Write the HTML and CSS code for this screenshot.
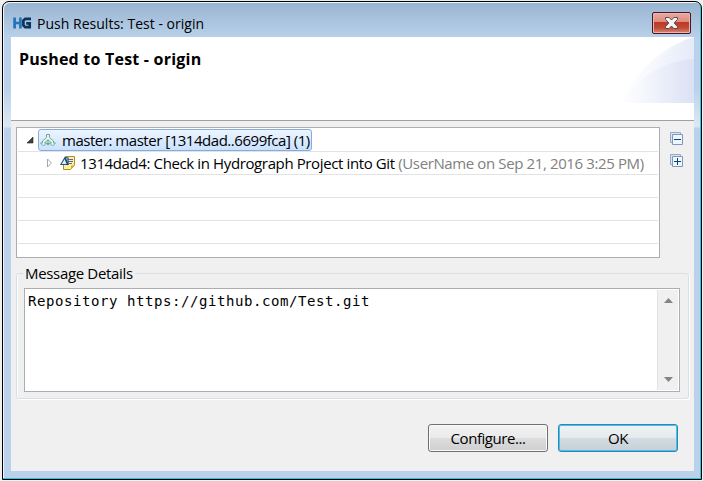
FILE: index.html
```html
<!DOCTYPE html>
<html lang="en">
<head>
<meta charset="utf-8">
<title>Push Results: Test - origin</title>
<link rel="stylesheet" href="styles.css">
</head>
<body>
<main class="window">
  <header class="titlebar">
    <svg class="logo" width="19" height="12" viewBox="0 0 19 12" fill="none" stroke-width="2.7"><path d="M1.6 0.5V11.5M7.4 0.5V11.5M1.6 6H8" stroke="#2475b5"/><path d="M18 1.9H12.2L10.4 3.5V8.5L12.2 10.1H16.7V6.3H13.2" stroke="#0c345c"/></svg>
    <h1 class="title">Push Results: Test - origin</h1>
    <button class="close" aria-label="Close"><svg width="37" height="20" viewBox="0 0 37 20"><path d="M12.5 4.5H16.2L18.5 7L20.8 4.5H24.5V6.3L21.2 10L24.5 13.7V15.5H20.8L18.5 13L16.2 15.5H12.5V13.7L15.8 10L12.5 6.3Z" fill="#f3f3f3" stroke="#5c4a55"/></svg></button>
  </header>
  <section class="client">
    <div class="banner">
      <h2>Pushed to Test - origin</h2>
      <svg class="swoosh" width="75" height="66" viewBox="0 0 75 66"><defs><linearGradient id="a"><stop stop-color="#fff"/><stop offset=".3" stop-color="#fafbfe"/><stop offset="1" stop-color="#eaeef9"/></linearGradient><linearGradient id="b"><stop stop-color="#f7f8fd" stop-opacity="0"/><stop offset="1" stop-color="#dbe1f5"/></linearGradient></defs><path d="M0 66C15 38 44 8 75 0V66Z" fill="url(#a)"/><path d="M19 66C26 37 46 9 75 0V66Z" fill="url(#b)" opacity=".3"/><path d="M0 66C20 40 43 24 75 22V66Z" fill="url(#b)"/></svg>
    </div>
    <div class="results">
      <div class="tree">
        <div class="row">
          <svg class="arrow open" width="8" height="8" viewBox="0 0 8 8"><path d="M7 1V7H1Z" fill="#404040" stroke="#222" stroke-width=".6"/></svg>
          <div class="selected">
            <svg class="push-icon" width="16" height="16" viewBox="0 0 16 16" fill="#edf7f3" stroke="#6aa698"><path d="M6.5 2.5H9.5V5.5L13.5 9V11H15.5L12.5 14L9.5 11H11.5L8 7.5L4.5 11H6.5L3.5 14L.5 11H2.5V9L6.5 5.5ZM8 8V11.5M6.5 11.5H9.5L8 13.2Z"/></svg>
            <span class="branch">master: master [1314dad..6699fca] (1)</span>
          </div>
        </div>
        <div class="row child">
          <svg class="arrow" width="7" height="10" viewBox="0 0 7 10"><path d="M1.5 1V9L5.5 5Z" fill="#fff" stroke="#a6a6a6"/></svg>
          <svg class="commit-icon" width="16" height="16" viewBox="0 0 16 16"><path d="M5.5 1.5H14.5V10L10.5 14.5H3.5V10Z" fill="#fff0a0" stroke="#b58b29"/><path d="M11 14V10.5H14Z" fill="#d7a72d"/><path d="M8 4.5H13M8 6.5H13M9 8.5H12" stroke="#536ba0"/><path d="M5 2.5L.8 9.5H8V3Z" fill="#dceefa" stroke="#245785" stroke-width="1.2"/><path d="M5 3L8 10" stroke="#174b80" stroke-width="1.8"/></svg>
          <span class="commit">1314dad4: Check in Hydrograph Project into Git <span class="meta">(UserName on Sep 21, 2016 3:25 PM)</span></span>
        </div>
        <div class="row"></div><div class="row"></div><div class="row"></div>
      </div>
      <div class="tools">
        <svg width="14" height="14" viewBox="0 0 14 14"><path d="M2 10.5H.5V.5H10.5V2" fill="#dbe5f1" stroke="#94a9c5"/><path d="M2.5 2.5H12.5V12.5H2.5Z" fill="#eef7ff" stroke="#8396b5"/><path d="M4 7.5H11" stroke="#064276"/></svg>
        <svg width="14" height="14" viewBox="0 0 14 14"><path d="M2 10.5H.5V.5H10.5V2" fill="#dbe5f1" stroke="#94a9c5"/><path d="M2.5 2.5H12.5V12.5H2.5Z" fill="#eef7ff" stroke="#8396b5"/><path d="M4 7.5H11M7.5 4V11" stroke="#064276"/></svg>
      </div>
    </div>
    <fieldset class="details">
      <legend>Message Details</legend>
      <div class="message"><pre>Repository https://github.com/Test.git</pre>
        <div class="scroll"><svg width="9" height="5" viewBox="0 0 9 5"><path d="M4.5 0L9 5H0Z" fill="#858585"/></svg><svg width="9" height="5" viewBox="0 0 9 5"><path d="M0 0H9L4.5 5Z" fill="#858585"/></svg></div>
      </div>
    </fieldset>
    <footer class="actions"><button class="button"><span class="configure">Configure...</span></button><button class="button primary"><span>OK</span></button></footer>
  </section>
</main>
</body>
</html>
```
FILE: styles.css
```css
* { box-sizing: border-box; }
body { margin: 0; padding: 1px 1px 1px 2px; width: 703px; height: 481px; overflow: hidden; background: #f0f0f0; font-family: "Open Sans", "Noto Sans", sans-serif; font-size: 15px; color: #000; }
svg { flex-shrink: 0; }
.window { width: 700px; height: 479px; border: 1px solid #000; border-radius: 7px 7px 0 0; background: linear-gradient(#99b4d1, #b9d1ea 36px, #b9d1ea 85px, #dce8f4 124px, #b9d1ea 127px); box-shadow: inset -1px -1px #20cbe6, inset 1px 1px #f2f7fc; padding: 0 7px 7px 8px; }
.titlebar { height: 35px; display: flex; align-items: center; padding: 7px 3px 0 2px; }
.logo { margin-top: -1px; }
.title { margin: 1px auto 0 5px; font-size: 14px; font-weight: 400; line-height: 20px; letter-spacing: .02px; white-space: nowrap; }
.close { width: 39px; height: 22px; padding: 0; border: 1px solid #451529; border-radius: 2px; background: linear-gradient(#e9aaa0, #df8b7e 45%, #b83b26 46%, #c24a34 75%, #d9897a); box-shadow: inset 0 0 0 1px #edb5ac; }
.close svg { display: block; }
.client { width: 683px; height: 434px; background: #f0f0f0; }
.banner { height: 84px; background: #fff; border-bottom: 1px solid #a0a0a0; display: flex; justify-content: space-between; padding-left: 8px; }
.banner h2 { margin: 11px 0 0; font-size: 16px; line-height: 23px; letter-spacing: .22px; }
.results { display: flex; padding: 6px 0 0 5px; }
.tree { width: 644px; height: 131px; border: 1px solid #abadb3; background: #fff; padding: 1px; }
.row { height: 23px; border-bottom: 1px solid #e3e3e3; display: flex; align-items: center; white-space: nowrap; }
.arrow.open { margin-left: 8px; }
.selected { height: 22px; width: 274px; margin-left: 4px; border: 1px solid #84acdd; border-radius: 3px; background: linear-gradient(#edf5ff, #c9e2ff); display: flex; align-items: center; padding-left: 1px; }
.branch { margin-left: 6px; line-height: 20px; letter-spacing: -.47px; }
.child { padding-left: 28px; }
.commit-icon { margin-left: 7px; }
.commit { margin-left: 4px; line-height: 21px; letter-spacing: -.38px; }
.meta { color: #808080; }
.tools { display: flex; flex-direction: column; gap: 8px; padding: 5px 0 0 10px; }
.details { width: 673px; height: 136px; margin: 5px 0 0 5px; padding: 5px 7px 6px; border: 1px solid #d5dfe5; border-radius: 3px; box-shadow: 1px 1px #fff, inset 1px 0 #fff; }
.details legend { margin-left: -1px; padding: 0 2px; line-height: 20px; letter-spacing: -.33px; }
.message { height: 104px; width: 656px; background: #fff; border: 1px solid #abadb3; display: flex; justify-content: space-between; padding: 1px; }
pre { margin: 0; padding: 1px 0 0 2px; font: 14px/20px "DejaVu Sans Mono", monospace; letter-spacing: .57px; }
.scroll { width: 21px; background: #f0f0f0; border-left: 1px solid #e3e3e3; display: flex; flex-direction: column; align-items: center; justify-content: space-between; padding: 8px 1px; }
.actions { display: flex; gap: 10px; padding: 25px 0 0 417px; }
.button { width: 120px; height: 28px; padding: 0; border: 1px solid #707070; border-radius: 3px; background: linear-gradient(#f2f2f2, #ebebeb 48%, #dddddd 50%, #cfcfcf); box-shadow: inset 0 0 0 1px #fafafa; font: 15px/20px "Open Sans", sans-serif; color: #000; letter-spacing: -.45px; }
.primary { border-color: #3c7fb1; background: linear-gradient(#eef3f5, #e5ebee 48%, #d3dce1 50%, #c5d0d7); box-shadow: inset 0 0 0 1px #39c8ef; }
```
